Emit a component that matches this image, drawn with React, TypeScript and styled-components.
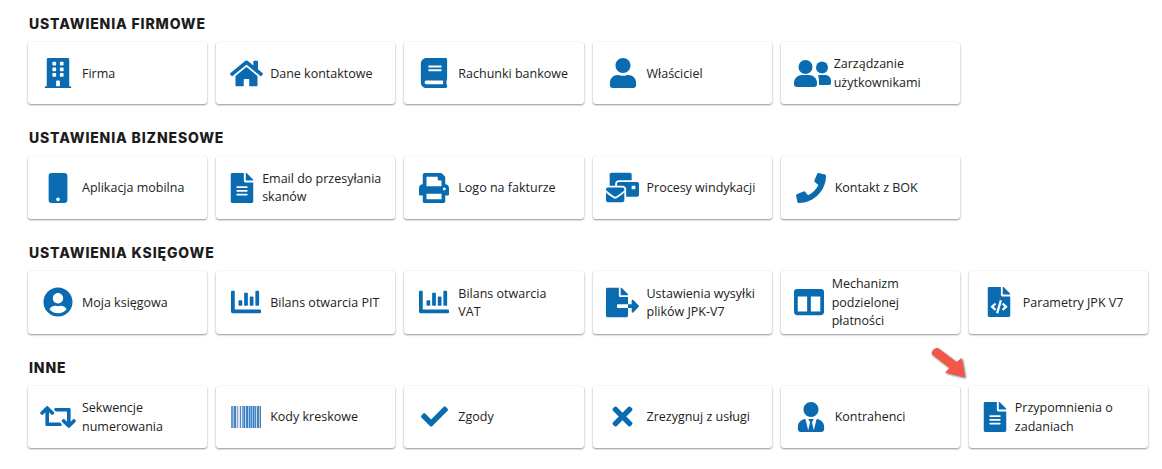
import styled, { createGlobalStyle } from "styled-components";
import type { ReactNode } from "react";
import {
  FaBuilding,
  FaHome,
  FaBook,
  FaUser,
  FaMobile,
  FaFileAlt,
  FaPrint,
  FaMailBulk,
  FaPhone,
  FaUserCircle,
  FaChartBar,
  FaFileExport,
  FaColumns,
  FaFileCode,
  FaRetweet,
  FaCheck,
  FaTimes,
  FaUserTie,
} from "react-icons/fa";

const GlobalStyle = createGlobalStyle`
  body {
    margin: 0;
    background: #fff;
    font-family: "Open Sans", "Liberation Sans", sans-serif;
    color: #222;
  }
`;

const Page = styled.div`
  position: relative;
  height: 469px;
  padding: 15.85px 14px 0 28px;
  box-sizing: border-box;
  overflow: hidden;
`;

const Section = styled.section`
  height: 114.6px;
`;

const Heading = styled.h2`
  margin: 0 0 10px 1px;
  font-family: "Inter", "Liberation Sans", sans-serif;
  font-size: 14px;
  line-height: 16px;
  font-weight: 800;
  letter-spacing: 0.85px;
  color: #1c1c1c;
`;

const Grid = styled.div`
  display: grid;
  grid-template-columns: repeat(6, 1fr);
  gap: 9px;
`;

const Card = styled.div`
  display: flex;
  align-items: center;
  height: 62.5px;
  background: #fff;
  border-radius: 3px;
  box-shadow: 0 1px 2px rgba(0, 0, 0, 0.42), 0 0 2px rgba(0, 0, 0, 0.06);
`;

const IconSlot = styled.div<{ $size: number; $slot: number }>`
  flex: 0 0 ${(p) => p.$slot}px;
  min-width: 0;
  margin-left: 12px;
  margin-right: 6px;
  display: flex;
  justify-content: center;
  align-items: center;
  color: #0a6bb0;
  font-size: ${(p) => p.$size}px;

  svg {
    flex: none;
  }
`;

const Label = styled.span`
  padding-top: 1.5px;
  font-size: 12.5px;
  line-height: 18.5px;
  white-space: pre-line;
`;

const Arrow = styled.svg`
  position: absolute;
  left: 930px;
  top: 346px;
  filter: drop-shadow(1px 1px 1px rgba(0, 0, 0, 0.6));
`;

const UsersSvg = styled.svg`
  margin-left: 4px;
`;

const Barcode = () => {
  const bars = [
    [0, 2, "#5f9ccf"], [2, 1, "#a5c4e2"], [3, 2, "#4f82b8"], [5, 1, "#f4d4da"],
    [6, 1, "#7dadd9"], [7, 2, "#d6e3f2"], [9, 1, "#4d8cc8"], [10, 1, "#eee6ee"],
    [11, 2, "#6ba6dc"], [13, 1, "#3f7cbc"], [14, 1, "#b8d4ee"], [15, 1, "#4d8ac8"],
    [16, 1, "#3a78ba"], [17, 1, "#acd0f0"], [18, 1, "#3f7ebc"], [19, 1, "#7ab4e6"],
    [20, 1, "#4486c4"], [21, 1, "#98c4ec"], [22, 1, "#3c7ab8"], [23, 1, "#7ab2e4"],
    [24, 1, "#4a86c2"], [25, 1, "#c2daf0"], [26, 2, "#4c80b6"], [28, 1, "#b0c8e0"],
    [29, 1, "#4a7cb2"],
  ] as const;
  return (
    <svg width="30" height="22" viewBox="0 0 30 22">
      {bars.map(([x, w, c]) => (
        <rect key={x} x={x} y="0" width={w} height="22" fill={c} />
      ))}
    </svg>
  );
};

const UsersIcon = () => (
  <UsersSvg width="37" height="27" viewBox="0 0 37 27" fill="currentColor">
    <circle cx="11.5" cy="7" r="7" />
    <path d="M0 23 C0 18 4 15 8 15 H15 C19 15 23 18 23 23 V24 C23 26 22 27 20 27 H3 C1 27 0 26 0 24 Z" />
    <circle cx="28" cy="7.5" r="6" />
    <path d="M24 15.5 C25 15 26 15 27 15 H31 C34.5 15 37 17.5 37 21 V23 C37 24.5 36 25 34.5 25 H25 V23 C25 20 25 18 24 15.5 Z" />
  </UsersSvg>
);

interface Item {
  icon: ReactNode;
  size?: number;
  slot?: number;
  label: string;
}

interface Group {
  title: string;
  items: Item[];
}

const groups: Group[] = [
  {
    title: "USTAWIENIA FIRMOWE",
    items: [
      { icon: <FaBuilding />, label: "Firma" },
      { icon: <FaHome />, size: 33, label: "Dane kontaktowe" },
      { icon: <FaBook />, label: "Rachunki bankowe" },
      { icon: <FaUser />, label: "Właściciel" },
      { icon: <UsersIcon />, slot: 35, label: "Zarządzanie\nużytkownikami" },
    ],
  },
  {
    title: "USTAWIENIA BIZNESOWE",
    items: [
      { icon: <FaMobile />, label: "Aplikacja mobilna" },
      { icon: <FaFileAlt />, slot: 28, label: "Email do przesyłania\nskanów" },
      { icon: <FaPrint />, label: "Logo na fakturze" },
      { icon: <FaMailBulk />, size: 33, label: "Procesy windykacji" },
      { icon: <FaPhone />, label: "Kontakt z BOK" },
    ],
  },
  {
    title: "USTAWIENIA KSIĘGOWE",
    items: [
      { icon: <FaUserCircle />, label: "Moja księgowa" },
      { icon: <FaChartBar />, label: "Bilans otwarcia PIT" },
      { icon: <FaChartBar />, label: "Bilans otwarcia\nVAT" },
      { icon: <FaFileExport />, size: 33, label: "Ustawienia wysyłki\nplików JPK-V7" },
      { icon: <FaColumns />, slot: 33, label: "Mechanizm\npodzielonej\npłatności" },
      { icon: <FaFileCode />, label: "Parametry JPK V7" },
    ],
  },
  {
    title: "INNE",
    items: [
      { icon: <FaRetweet />, size: 36, label: "Sekwencje\nnumerowania" },
      { icon: <Barcode />, label: "Kody kreskowe" },
      { icon: <FaCheck />, size: 27, label: "Zgody" },
      { icon: <FaTimes />, size: 29, label: "Zrezygnuj z usługi" },
      { icon: <FaUserTie />, label: "Kontrahenci" },
      { icon: <FaFileAlt />, slot: 28, label: "Przypomnienia o\nzadaniach" },
    ],
  },
];

const App = () => {
  return (
    <Page>
      <GlobalStyle />
      {groups.map((group) => (
        <Section key={group.title}>
          <Heading>{group.title}</Heading>
          <Grid>
            {group.items.map((item) => (
              <Card key={item.label}>
                <IconSlot $size={item.size ?? 30} $slot={item.slot ?? 36}>
                  {item.icon}
                </IconSlot>
                <Label>{item.label}</Label>
              </Card>
            ))}
          </Grid>
        </Section>
      ))}
      <Arrow width="40" height="36" viewBox="0 0 40 36">
        <path
          d="M8.5 2.5 L26.5 16 L31.7 12 L35 31.3 L15 26.5 L19.5 22 L2 8.5 C0.5 5.5 5.5 0.5 8.5 2.5 Z"
          fill="#f4574a"
        />
      </Arrow>
    </Page>
  );
};

export default App;
